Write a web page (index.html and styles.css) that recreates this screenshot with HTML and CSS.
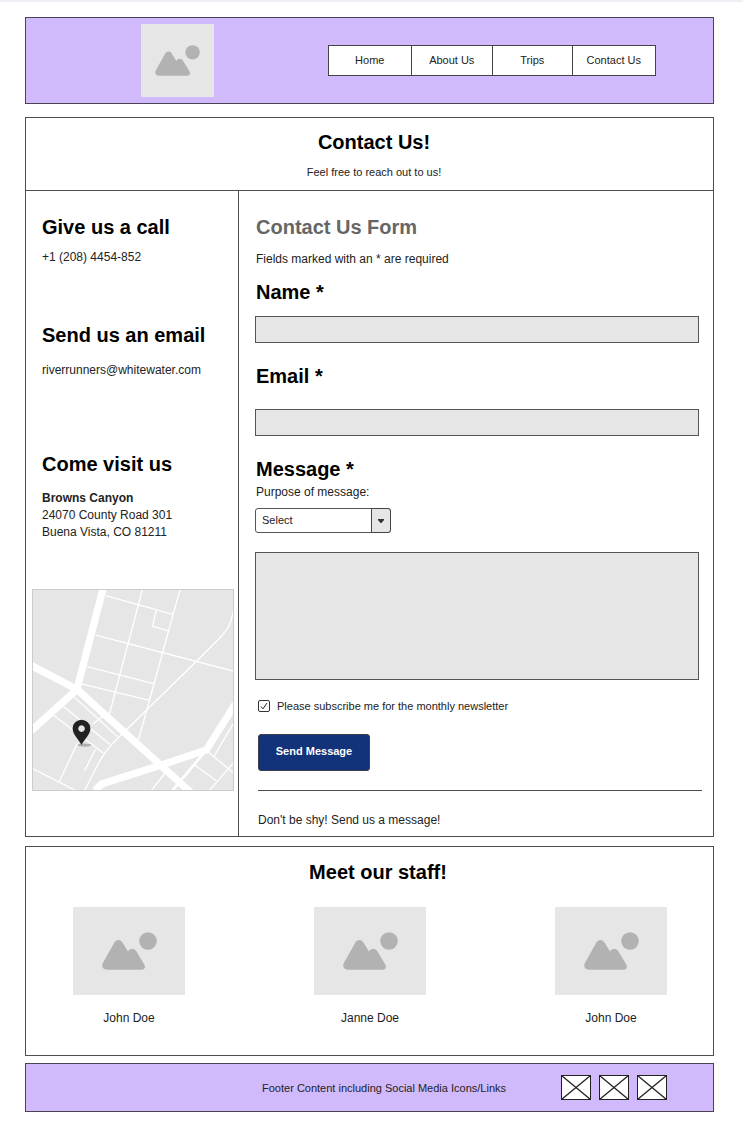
FILE: index.html
```html
<!DOCTYPE html>
<html lang="en">
<head>
<meta charset="utf-8">
<title>Contact Us</title>
<link rel="stylesheet" href="styles.css">
</head>
<body>
<svg class="defs" aria-hidden="true">
  <symbol id="picture" viewBox="0 0 55 38">
    <path d="M5 37.7C1 37.7-1 34.5 1 30.8L12 11.2C14.2 7 18.5 7 20.8 11L26 19.5C28 16 32.2 15.6 34.5 19.5L42.3 32.5C44 35.5 42 37.7 39.5 37.7Z"/>
    <circle cx="46" cy="9" r="8.8"/>
  </symbol>
  <symbol id="crossed" viewBox="0 0 30 25">
    <rect x="0.5" y="0.5" width="29" height="24" fill="#fff"/>
    <path d="M0.5 0.5L29.5 24.5M29.5 0.5L0.5 24.5" stroke-width="1.3"/>
  </symbol>
</svg>

<header class="site-header">
  <div class="placeholder logo"><svg class="logo-icon"><use href="#picture"/></svg></div>
  <nav class="nav">
    <a href="#">Home</a>
    <a href="#">About Us</a>
    <a href="#">Trips</a>
    <a href="#">Contact Us</a>
  </nav>
</header>

<main>
  <section class="contact">
    <div class="intro">
      <h1>Contact Us!</h1>
      <p class="small">Feel free to reach out to us!</p>
    </div>
    <div class="columns">
      <aside class="sidebar">
        <section class="info call">
          <h2>Give us a call</h2>
          <p>+1 (208) 4454-852</p>
        </section>
        <section class="info mail">
          <h2>Send us an email</h2>
          <p>riverrunners@whitewater.com</p>
        </section>
        <section class="info visit">
          <h2>Come visit us</h2>
          <address><strong>Browns Canyon</strong><br>24070 County Road 301<br>Buena Vista, CO 81211</address>
        </section>
        <svg class="map" viewBox="37 27 606 606" role="img" aria-label="Map">
          <g class="avenues">
            <path d="M250 20L170 328M30 255L170 328L520 645M30 455L170 328"/>
            <path d="M225 635L245 615L430 556L562 512L650 372"/>
          </g>
          <path class="lane" d="M562 512L458 636"/>
          <g class="streets">
            <path d="M257 44L461 101M370 20L268 405M484 20L357 480M411 89L399 137L446 150M227 164L645 273M201 259L402 311M186 312L388 361"/>
            <path d="M645 88C636 130 630 143 605 170L530 245L300 470C250 515 240 545 193 634"/>
            <path d="M158 348L294 472M127 378L270 495M97 405L250 521M250 408L218 433M172 490L117 607M30 565L165 634M226 510L193 575"/>
            <path d="M567 517L645 582M527 557L592 605M645 550L572 634M645 430L586 530M438 580L396 634"/>
          </g>
          <ellipse cx="193" cy="497" rx="21" ry="5" fill="#b0b0b0"/>
          <path fill="#222" fill-rule="evenodd" d="M184 497C175 478 157 465 157 446A27 26 0 0 1 211 446C211 465 193 478 184 497ZM184 437a10 10 0 1 0 0.1 0Z"/>
        </svg>
      </aside>

      <form class="form">
        <div class="fields">
          <h2 class="form-title">Contact Us Form</h2>
          <p class="hint">Fields marked with an * are required</p>
          <label class="title" for="name">Name *</label>
          <input class="text name" id="name" type="text">
          <label class="title" for="email">Email *</label>
          <input class="text email" id="email" type="email">
          <label class="title" for="message">Message *</label>
          <label class="purpose" for="purpose">Purpose of message:</label>
          <div class="select">
            <select id="purpose"><option>Select</option></select>
            <span class="arrow"><svg viewBox="0 0 6 4"><path d="M0 0H6V1L3.5 4H2.5L0 1Z"/></svg></span>
          </div>
          <textarea id="message"></textarea>
        </div>
        <div class="actions">
          <div class="subscribe">
            <span class="check">
              <input id="newsletter" type="checkbox" checked>
              <svg viewBox="0 0 12 12"><path d="M3 6.5L5 8.8L9 3"/></svg>
            </span>
            <label class="small" for="newsletter">Please subscribe me for the monthly newsletter</label>
          </div>
          <button type="button">Send Message</button>
          <hr>
          <p>Don't be shy! Send us a message!</p>
        </div>
      </form>
    </div>
  </section>

  <section class="staff">
    <h2>Meet our staff!</h2>
    <div class="people">
      <figure>
        <div class="placeholder photo"><svg class="photo-icon"><use href="#picture"/></svg></div>
        <figcaption>John Doe</figcaption>
      </figure>
      <figure>
        <div class="placeholder photo"><svg class="photo-icon"><use href="#picture"/></svg></div>
        <figcaption>Janne Doe</figcaption>
      </figure>
      <figure>
        <div class="placeholder photo"><svg class="photo-icon"><use href="#picture"/></svg></div>
        <figcaption>John Doe</figcaption>
      </figure>
    </div>
  </section>
</main>

<footer class="site-footer">
  <p class="small">Footer Content including Social Media Icons/Links</p>
  <div class="social">
    <a href="#" aria-label="Social link 1"><svg><use href="#crossed"/></svg></a>
    <a href="#" aria-label="Social link 2"><svg><use href="#crossed"/></svg></a>
    <a href="#" aria-label="Social link 3"><svg><use href="#crossed"/></svg></a>
  </div>
</footer>
</body>
</html>
```

FILE: styles.css
```css
* { box-sizing: border-box; }

body {
  margin: 0;
  padding: 15px 29px 14px 25px;
  border-top: 2px solid #edf1f5;
  background: #fff;
  color: #222;
  font: 12px/16px "Liberation Sans", Arial, sans-serif;
}

h1, h2, p, figure, address { margin: 0; font-style: normal; }
h1, h2, .title {
  color: #000;
  font-size: 20px;
  font-weight: bold;
  line-height: 24px;
}
svg { display: block; }
.defs { position: absolute; width: 0; height: 0; }
.small { font-size: 11px; }

.placeholder {
  display: flex;
  align-items: center;
  justify-content: center;
  background: #e6e6e6;
  fill: #b2b2b2;
}

/* Header */
.site-header {
  display: flex;
  align-items: center;
  gap: 114px;
  margin-bottom: 13px;
  padding: 6px 57px 6px 115px;
  border: 1px solid #4a4357;
  background: #d0bafc;
}
.logo { flex: none; width: 73px; height: 73px; }
.logo-icon { width: 45px; height: 31px; }
.nav {
  display: grid;
  flex: 1;
  grid-template-columns: 82fr 82fr 80fr 84fr;
  border: 1px solid #444;
  background: #fff;
}
.nav a {
  padding: 6px 0 7px;
  color: #222;
  font-size: 11px;
  text-align: center;
  text-decoration: none;
}
.nav a + a { border-left: 1px solid #444; }

/* Contact */
.contact { margin-bottom: 9px; border: 1px solid #4d4d4d; }
.intro {
  padding: 12px 0 10px 9px;
  border-bottom: 1px solid #4d4d4d;
  text-align: center;
}
.intro h1 { margin-bottom: 10px; }
.columns { display: flex; }
.sidebar {
  flex: none;
  width: 213px;
  padding: 24px 4px 0 6px;
  border-right: 1px solid #4d4d4d;
}
.info { padding-left: 10px; }
.call h2 { margin-bottom: 10px; }
.call { margin-bottom: 58px; }
.mail h2 { margin-bottom: 15px; }
.mail { margin-bottom: 74px; }
.visit h2 { margin-bottom: 14px; }
.visit { margin-bottom: 48px; }
address { line-height: 17px; }

.map {
  width: 100%;
  border: 1px solid #ccc;
  background: #e6e6e6;
}
.map .avenues, .map .streets, .map .lane { fill: none; stroke: #fff; }
.map .avenues { stroke-width: 22; }
.map .lane { stroke-width: 8; }
.map .streets { stroke-width: 4; }

.form { flex: 1; padding: 24px 11px 8px 16px; }
.fields { display: flex; flex-direction: column; margin-right: 3px; }
.form-title, .hint, .title, .purpose { padding-left: 1px; }
.form-title { margin-bottom: 12px; color: #666; }
.hint { margin-bottom: 13px; }
.text, textarea {
  width: 100%;
  margin: 0;
  padding: 4px 6px;
  border: 1px solid #555;
  border-radius: 0;
  background: #e6e6e6;
  font: inherit;
  outline: 0;
}
.text { height: 27px; }
.name { margin: 12px 0 21px; }
.email { margin: 21px 0; }
.purpose { margin: 3px 0 8px; }
.select { position: relative; width: 136px; height: 25px; }
.select select {
  width: 100%;
  height: 100%;
  padding: 0 24px 1px 6px;
  appearance: none;
  border: 1px solid #555;
  border-radius: 3px;
  background: #fff;
  color: #222;
  font: 11px "Liberation Sans", Arial, sans-serif;
}
.arrow {
  position: absolute;
  top: 0;
  right: 0;
  bottom: 0;
  display: flex;
  align-items: center;
  justify-content: center;
  width: 20px;
  border: 1px solid #444;
  border-radius: 0 3px 3px 0;
  background: #e6e6e6;
  pointer-events: none;
}
.arrow svg { width: 6px; height: 4px; fill: #333; }
textarea { display: block; height: 128px; margin-top: 19px; resize: none; }

.actions { margin-left: 3px; padding-top: 18px; }
.subscribe { display: flex; align-items: center; gap: 7px; margin-bottom: 20px; }
.check { position: relative; width: 12px; height: 12px; }
.check input {
  display: block;
  width: 12px;
  height: 12px;
  margin: 0;
  appearance: none;
  border: 1px solid #333;
  border-radius: 2px;
}
.check svg {
  position: absolute;
  inset: 0;
  fill: none;
  stroke: #222;
  pointer-events: none;
}
button {
  display: block;
  width: 112px;
  height: 37px;
  padding: 0 0 3px;
  border: 1px solid #3a3f4c;
  border-radius: 3px;
  background: #12327a;
  color: #fff;
  font: bold 11px "Liberation Sans", Arial, sans-serif;
}
hr { margin: 19px 0 21px; border: 0; border-top: 1px solid #4d4d4d; }

/* Staff */
.staff {
  margin-bottom: 7px;
  padding: 13px 46px 29px 47px;
  border: 1px solid #4d4d4d;
}
.staff h2 { margin-bottom: 23px; padding-left: 16px; text-align: center; }
.people { display: flex; justify-content: space-between; text-align: center; }
.photo { width: 112px; height: 88px; margin-bottom: 15px; }
.photo-icon { width: 55px; height: 38px; }

/* Footer */
.site-footer {
  display: flex;
  align-items: center;
  justify-content: flex-end;
  gap: 55px;
  padding: 11px 46px;
  border: 1px solid #4a4357;
  background: #d0bafc;
}
.social { display: flex; gap: 8px; }
.social svg { width: 30px; height: 25px; stroke: #222; }
```
